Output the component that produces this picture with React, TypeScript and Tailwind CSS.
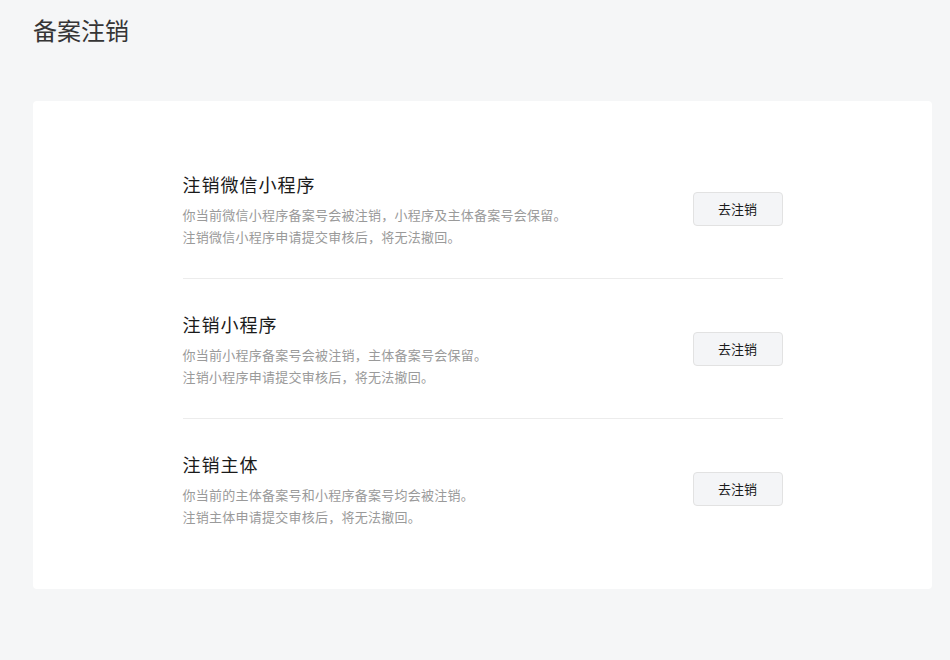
const ITEMS = [
  {
    title: '注销微信小程序',
    lines: ['你当前微信小程序备案号会被注销，小程序及主体备案号会保留。', '注销微信小程序申请提交审核后，将无法撤回。'],
  },
  {
    title: '注销小程序',
    lines: ['你当前小程序备案号会被注销，主体备案号会保留。', '注销小程序申请提交审核后，将无法撤回。'],
  },
  {
    title: '注销主体',
    lines: ['你当前的主体备案号和小程序备案号均会被注销。', '注销主体申请提交审核后，将无法撤回。'],
  },
];

export default function App() {
  return (
    <div
      className="min-h-[660px] w-full bg-[#f5f6f7] px-[33px] pt-[16px] pb-[71px]"
      style={{ fontFamily: '"Noto Sans CJK SC", "Noto Sans", sans-serif' }}
    >
      <h1 className="text-[24px] leading-[28px] font-normal text-[#353535]">备案注销</h1>

      <div className="mt-[57px] w-[899px] rounded bg-white pt-[38px] pb-[31px]">
        <div className="mx-auto w-[600px]">
          {ITEMS.map((item, i) => (
            <div
              key={item.title}
              className={`flex items-center justify-between pt-8 pb-[30px] ${i < ITEMS.length - 1 ? 'border-b border-[#ececec]' : ''}`}
            >
              <div>
                <div className="text-[18px] leading-[26px] tracking-[1px] text-[#1a1a1a]">{item.title}</div>
                <div className="mt-[7px] text-[13px] leading-[22px] tracking-[0.25px] text-[#9a9a9a]">
                  {item.lines.map((l) => (
                    <p key={l}>{l}</p>
                  ))}
                </div>
              </div>
              <button className="-mt-[2px] h-[34px] w-[90px] rounded border border-[#e2e2e2] bg-[#f4f5f7] text-[13px] text-[#1a1a1a]">
                去注销
              </button>
            </div>
          ))}
        </div>
      </div>
    </div>
  );
}
